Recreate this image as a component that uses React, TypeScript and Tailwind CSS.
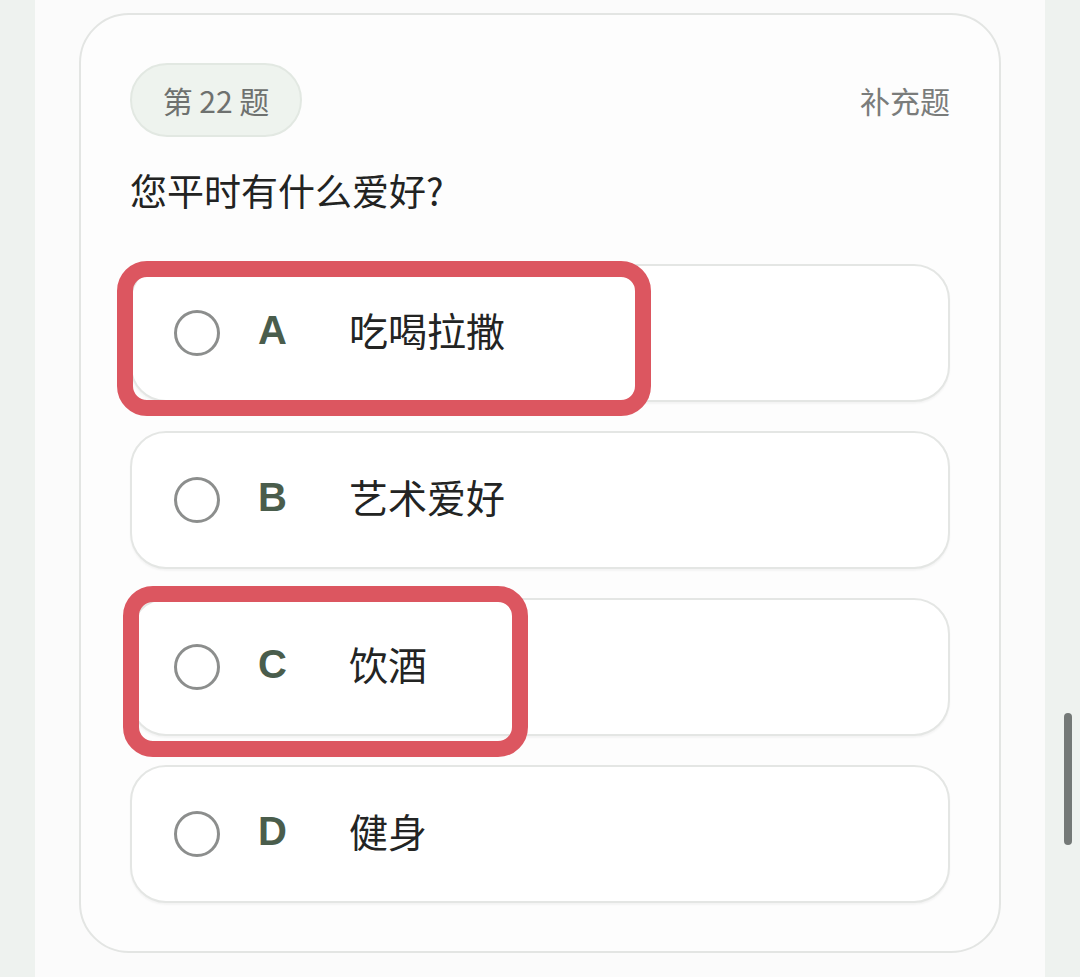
import React from "react";

const options = [
  { key: "A", text: "吃喝拉撒" },
  { key: "B", text: "艺术爱好" },
  { key: "C", text: "饮酒" },
  { key: "D", text: "健身" },
];

const cjk = "font-['Noto_Sans_CJK_SC','Noto_Sans',sans-serif]";

export default function App() {
  return (
    <div className={`relative flex h-[977px] w-[1080px] overflow-hidden bg-[#eef2ef] ${cjk}`}>
      {/* page panel */}
      <div className="ml-[35px] h-full w-[1010px] bg-[#fbfbfb] pt-[13px]">
        <div className="relative ml-[44px] h-[940px] w-[922px] rounded-[50px] border-2 border-[#e3e5e3] bg-[#fdfdfd] px-[49px] pt-[48px]">
          {/* header */}
          <div className="flex items-center justify-between">
            <div className="flex h-[74px] w-[172px] items-center justify-center rounded-full border-2 border-[#e2e8e2] bg-[#eef3ee] text-[30px] text-[#6e716f]">
              第 22 题
            </div>
            <div className="text-[30px] text-[#7a7c7b]">补充题</div>
          </div>

          <h2 className="mt-[26px] text-[37px] leading-[54px] text-[#222322]">您平时有什么爱好?</h2>

          {/* options */}
          <div className="mt-[47px] flex flex-col gap-[29px]">
            {options.map((o) => (
              <div
                key={o.key}
                className="flex h-[138px] items-center rounded-[36px] border-2 border-[#e4e6e4] bg-white pl-[42px] shadow-[0_2px_2px_rgba(0,0,0,0.04)]"
              >
                <span className="h-[46px] w-[46px] shrink-0 rounded-full border-[3px] border-[#8c8e8d]" />
                <span className="mb-[6px] ml-[38px] w-[91px] font-['Liberation_Sans',Arial,sans-serif] text-[40px] font-bold leading-none text-[#4a5d4c]">
                  {o.key}
                </span>
                <span className="mb-[8px] text-[39px] text-[#232423]">{o.text}</span>
              </div>
            ))}
          </div>

          {/* red annotation boxes */}
          <div className="absolute left-[36px] top-[246px] h-[155px] w-[534px] rounded-[30px] border-[16px] border-[#dc5660]" />
          <div className="absolute left-[42px] top-[571px] h-[171px] w-[405px] rounded-[30px] border-[16px] border-[#dc5660]" />
        </div>
      </div>

      {/* scrollbar */}
      <div className="absolute left-[1064px] top-[713px] h-[132px] w-[8px] rounded-full bg-[#747977]" />
    </div>
  );
}
